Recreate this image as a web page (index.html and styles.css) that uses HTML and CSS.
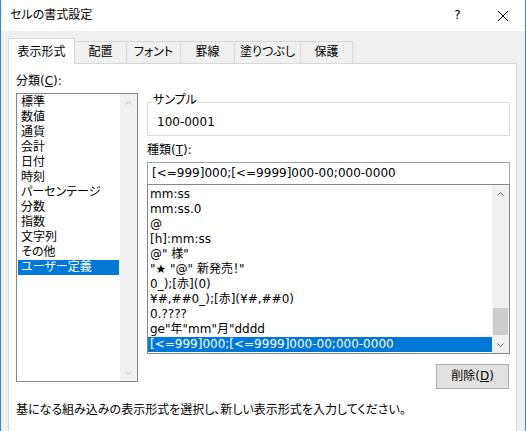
FILE: index.html
```html
<!DOCTYPE html>
<html lang="ja">
<head>
<meta charset="utf-8">
<title>セルの書式設定</title>
<link rel="stylesheet" href="styles.css">
</head>
<body>
<div class="window">
  <div class="titlebar">
    <div class="title">セルの書式設定</div>
    <div class="caption-btn">?</div>
    <div class="caption-btn">
      <svg width="10" height="10" viewBox="0 0 10 10"><path d="M0 0L10 10M10 0L0 10" stroke="#000" stroke-width="1" fill="none"/></svg>
    </div>
  </div>
  <div class="body">
    <div class="tabs">
      <div class="tab tab-active tab-w67">表示形式</div>
      <div class="tab tab-w53">配置</div>
      <div class="tab tab-w55">フォント</div>
      <div class="tab tab-w55">罫線</div>
      <div class="tab tab-w67">塗りつぶし</div>
      <div class="tab tab-w53">保護</div>
    </div>
    <div class="panel">
      <div class="columns">
        <div class="col-left">
          <div class="label">分類(<u>C</u>):</div>
          <div class="listbox category">
            <ul class="items">
              <li class="item">標準</li>
              <li class="item">数値</li>
              <li class="item">通貨</li>
              <li class="item">会計</li>
              <li class="item">日付</li>
              <li class="item">時刻</li>
              <li class="item">パーセンテージ</li>
              <li class="item">分数</li>
              <li class="item">指数</li>
              <li class="item">文字列</li>
              <li class="item">その他</li>
              <li class="item selected">ユーザー定義</li>
            </ul>
            <div class="scrollbar disabled">
              <div class="arrow"><svg width="7" height="4" viewBox="0 0 7 4"><path d="M0.5 3.5L3.5 0.5L6.5 3.5" fill="none" stroke="currentColor"/></svg></div>
              <div class="track"></div>
              <div class="arrow"><svg width="7" height="4" viewBox="0 0 7 4"><path d="M0.5 0.5L3.5 3.5L6.5 0.5" fill="none" stroke="currentColor"/></svg></div>
            </div>
          </div>
        </div>
        <div class="col-right">
          <fieldset class="sample">
            <legend>サンプル</legend>
            <div>100-0001</div>
          </fieldset>
          <div class="label label-type">種類(<u>T</u>):</div>
          <div class="input">[&lt;=999]000;[&lt;=9999]000-00;000-0000</div>
          <div class="listbox types">
            <ul class="items">
              <li class="item">mm:ss</li>
              <li class="item">mm:ss.0</li>
              <li class="item">@</li>
              <li class="item">[h]:mm:ss</li>
              <li class="item">@" 様"</li>
              <li class="item">"★ "@" 新発売！"</li>
              <li class="item">0_);[赤](0)</li>
              <li class="item">¥#,##0_);[赤](¥#,##0)</li>
              <li class="item">0.????</li>
              <li class="item">ge"年"mm"月"dddd</li>
              <li class="item selected">[&lt;=999]000;[&lt;=9999]000-00;000-0000</li>
            </ul>
            <div class="scrollbar">
              <div class="arrow"><svg width="7" height="4" viewBox="0 0 7 4"><path d="M0.5 3.5L3.5 0.5L6.5 3.5" fill="none" stroke="currentColor"/></svg></div>
              <div class="track"><div class="thumb"></div></div>
              <div class="arrow"><svg width="7" height="4" viewBox="0 0 7 4"><path d="M0.5 0.5L3.5 3.5L6.5 0.5" fill="none" stroke="currentColor"/></svg></div>
            </div>
          </div>
          <div class="actions">
            <button class="button" type="button">削除(<u>D</u>)</button>
          </div>
        </div>
      </div>
      <p class="hint">基になる組み込みの表示形式を選択し、新しい表示形式を入力してください。</p>
    </div>
  </div>
</div>
</body>
</html>
```

FILE: styles.css
```css
* {
  box-sizing: border-box;
}

html,
body {
  margin: 0;
  padding: 0;
}

body {
  font-family: "DejaVu Sans", "Noto Sans CJK JP", sans-serif;
  font-size: 12px;
  line-height: 15px;
  color: #000;
  font-feature-settings: "palt" 1;
  background: #fff;
}

.window {
  width: 526px;
  height: 431px;
  border-left: 1px solid #2b88d8;
  border-right: 1px solid #2b88d8;
  display: flex;
  flex-direction: column;
  background: #f0f0f0;
  overflow: hidden;
}

.titlebar {
  height: 31px;
  flex: none;
  background: #fff;
  display: flex;
  align-items: center;
}

.title {
  flex: 1;
  padding-left: 9px;
}

.caption-btn {
  width: 45px;
  height: 31px;
  display: flex;
  align-items: center;
  justify-content: center;
}

.body {
  flex: 1;
  display: flex;
  flex-direction: column;
  padding: 7px 8px 0 7px;
}

.tabs {
  display: flex;
  align-items: flex-end;
}

.tab {
  height: 22px;
  border: 1px solid #d9d9d9;
  border-bottom: none;
  background: #f0f0f0;
  margin-left: -1px;
  display: flex;
  align-items: center;
  justify-content: center;
  white-space: nowrap;
}

.tab:first-child {
  margin-left: 0;
}

.tab-active {
  height: 26px;
  background: #fff;
  margin-bottom: -1px;
  padding-top: 1px;
  position: relative;
  z-index: 1;
}

.tab-w53 { width: 53px; }
.tab-w55 { width: 55px; }
.tab-w67 { width: 67px; }

.panel {
  flex: 1;
  background: #fff;
  border: 1px solid #d9d9d9;
  border-bottom: none;
  padding: 10px 6px 0 7px;
}

.columns {
  display: flex;
  gap: 9px;
}

.col-left {
  width: 122px;
  flex: none;
}

.col-right {
  width: 363px;
  flex: none;
  padding-top: 19px;
  display: flex;
  flex-direction: column;
}

.label {
  height: 15px;
  margin-bottom: 4px;
  white-space: nowrap;
}

.label-type {
  margin-top: 7px;
}

.listbox {
  border: 1px solid #828790;
  background: #fff;
  display: flex;
}

.category {
  height: 289px;
}

.types {
  height: 170px;
}

.items {
  flex: 1;
  list-style: none;
  margin: 0;
  padding: 1px;
  min-width: 0;
  overflow: hidden;
}

.types .items {
  padding: 2px 0 0 0;
}

.item {
  height: 15px;
  padding-left: 3px;
  white-space: nowrap;
}

.types .item {
  padding-left: 2px;
}

.item.selected {
  background: #0078d7;
  color: #fff;
}

.scrollbar {
  width: 17px;
  flex: none;
  background: #f0f0f0;
  display: flex;
  flex-direction: column;
}

.arrow {
  height: 17px;
  flex: none;
  display: flex;
  align-items: center;
  justify-content: center;
  color: #606060;
}

.scrollbar.disabled .arrow {
  color: #bfbfbf;
}

.track {
  flex: 1;
  display: flex;
  flex-direction: column;
  justify-content: flex-end;
}

.thumb {
  height: 27px;
  margin: 0 1px 1px;
  background: #cdcdcd;
}

.sample {
  margin: 0;
  border: 1px solid #dcdcdc;
  padding: 3px 9px 5px 9px;
  min-width: 0;
}

.sample legend {
  margin-left: -5px;
  padding: 0 1px 4px;
  line-height: 15px;
}

.input {
  height: 22px;
  border: 1px solid #a5a5a5;
  border-bottom: none;
  padding: 0 4px;
  display: flex;
  align-items: center;
  white-space: nowrap;
  overflow: hidden;
  background: #fff;
}

.actions {
  display: flex;
  justify-content: flex-end;
  margin-top: 10px;
  padding-right: 1px;
}

.button {
  width: 73px;
  height: 25px;
  background: #e1e1e1;
  border: 1px solid #adadad;
  font: inherit;
  line-height: 15px;
  color: #000;
  padding: 0;
  font-feature-settings: "palt" 1;
}

.hint {
  margin: 14px 0 0;
  white-space: nowrap;
}
```
